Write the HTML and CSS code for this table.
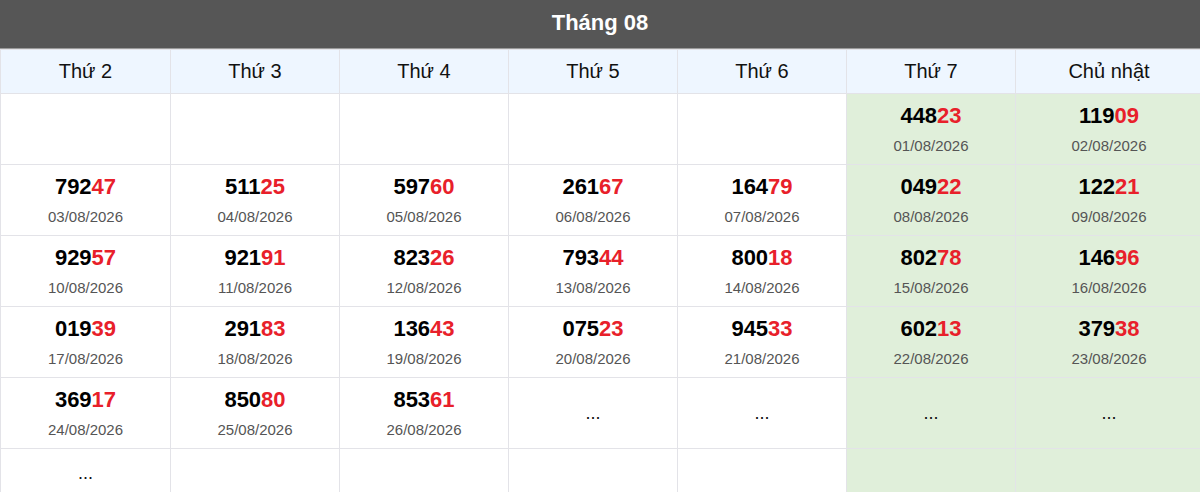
FILE: index.html
```html
<!DOCTYPE html>
<html lang="vi">
<head>
<meta charset="utf-8">
<link rel="stylesheet" href="styles.css">
</head>
<body>
<div class="cal">
  <div class="title">Tháng 08</div>
  <table class="grid">
    <colgroup>
      <col class="c1"><col class="cn"><col class="cn"><col class="cn"><col class="cn"><col class="cn"><col class="cl">
    </colgroup>
    <thead>
      <tr><th>Thứ 2</th><th>Thứ 3</th><th>Thứ 4</th><th>Thứ 5</th><th>Thứ 6</th><th>Thứ 7</th><th>Chủ nhật</th></tr>
    </thead>
    <tbody>
      <tr>
        <td></td><td></td><td></td><td></td><td></td>
        <td class="we"><div class="num">448<span>23</span></div><div class="date">01/08/2026</div></td>
        <td class="we"><div class="num">119<span>09</span></div><div class="date">02/08/2026</div></td>
      </tr>
      <tr>
        <td><div class="num">792<span>47</span></div><div class="date">03/08/2026</div></td>
        <td><div class="num">511<span>25</span></div><div class="date">04/08/2026</div></td>
        <td><div class="num">597<span>60</span></div><div class="date">05/08/2026</div></td>
        <td><div class="num">261<span>67</span></div><div class="date">06/08/2026</div></td>
        <td><div class="num">164<span>79</span></div><div class="date">07/08/2026</div></td>
        <td class="we"><div class="num">049<span>22</span></div><div class="date">08/08/2026</div></td>
        <td class="we"><div class="num">122<span>21</span></div><div class="date">09/08/2026</div></td>
      </tr>
      <tr>
        <td><div class="num">929<span>57</span></div><div class="date">10/08/2026</div></td>
        <td><div class="num">921<span>91</span></div><div class="date">11/08/2026</div></td>
        <td><div class="num">823<span>26</span></div><div class="date">12/08/2026</div></td>
        <td><div class="num">793<span>44</span></div><div class="date">13/08/2026</div></td>
        <td><div class="num">800<span>18</span></div><div class="date">14/08/2026</div></td>
        <td class="we"><div class="num">802<span>78</span></div><div class="date">15/08/2026</div></td>
        <td class="we"><div class="num">146<span>96</span></div><div class="date">16/08/2026</div></td>
      </tr>
      <tr>
        <td><div class="num">019<span>39</span></div><div class="date">17/08/2026</div></td>
        <td><div class="num">291<span>83</span></div><div class="date">18/08/2026</div></td>
        <td><div class="num">136<span>43</span></div><div class="date">19/08/2026</div></td>
        <td><div class="num">075<span>23</span></div><div class="date">20/08/2026</div></td>
        <td><div class="num">945<span>33</span></div><div class="date">21/08/2026</div></td>
        <td class="we"><div class="num">602<span>13</span></div><div class="date">22/08/2026</div></td>
        <td class="we"><div class="num">379<span>38</span></div><div class="date">23/08/2026</div></td>
      </tr>
      <tr>
        <td><div class="num">369<span>17</span></div><div class="date">24/08/2026</div></td>
        <td><div class="num">850<span>80</span></div><div class="date">25/08/2026</div></td>
        <td><div class="num">853<span>61</span></div><div class="date">26/08/2026</div></td>
        <td class="dots">...</td>
        <td class="dots">...</td>
        <td class="we dots">...</td>
        <td class="we dots">...</td>
      </tr>
      <tr class="last">
        <td class="dots">...</td>
        <td></td><td></td><td></td><td></td>
        <td class="we"></td>
        <td class="we"></td>
      </tr>
    </tbody>
  </table>
</div>
</body>
</html>
```

FILE: styles.css
```css
html, body {
  margin: 0;
  padding: 0;
  background: #ffffff;
}
body {
  font-family: "Liberation Sans", Arial, sans-serif;
  color: #111;
  overflow: hidden;
}
.cal {
  width: 1200px;
}
.title {
  height: 48px;
  background: #565656;
  color: #ffffff;
  font-weight: bold;
  font-size: 22px;
  line-height: 46px;
  text-align: center;
  border-bottom: 1px solid #9a9a9a;
}
.grid {
  border-collapse: collapse;
  table-layout: fixed;
  width: 1202px;
}
.c1 { width: 170px; }
.cn { width: 169px; }
.cl { width: 187px; }
.grid th, .grid td {
  border: 1px solid #e3e3e8;
  text-align: center;
  padding: 0;
}
.grid th {
  height: 43px;
  background: #eef6ff;
  font-weight: normal;
  font-size: 20px;
  color: #111;
}
.grid td {
  height: 70px;
  vertical-align: top;
}
.grid tr.last td {
  height: 48px;
}
.grid td.we {
  background: #e0efda;
}
.num {
  margin-top: 10px;
  font-size: 22px;
  font-weight: bold;
  line-height: 24px;
  color: #000;
}
.num span {
  color: #e8202a;
}
.date {
  margin-top: 9px;
  font-size: 15px;
  line-height: 18px;
  color: #555;
}
.grid td.dots {
  vertical-align: middle;
  font-size: 18px;
  line-height: 20px;
  color: #111;
}
```
